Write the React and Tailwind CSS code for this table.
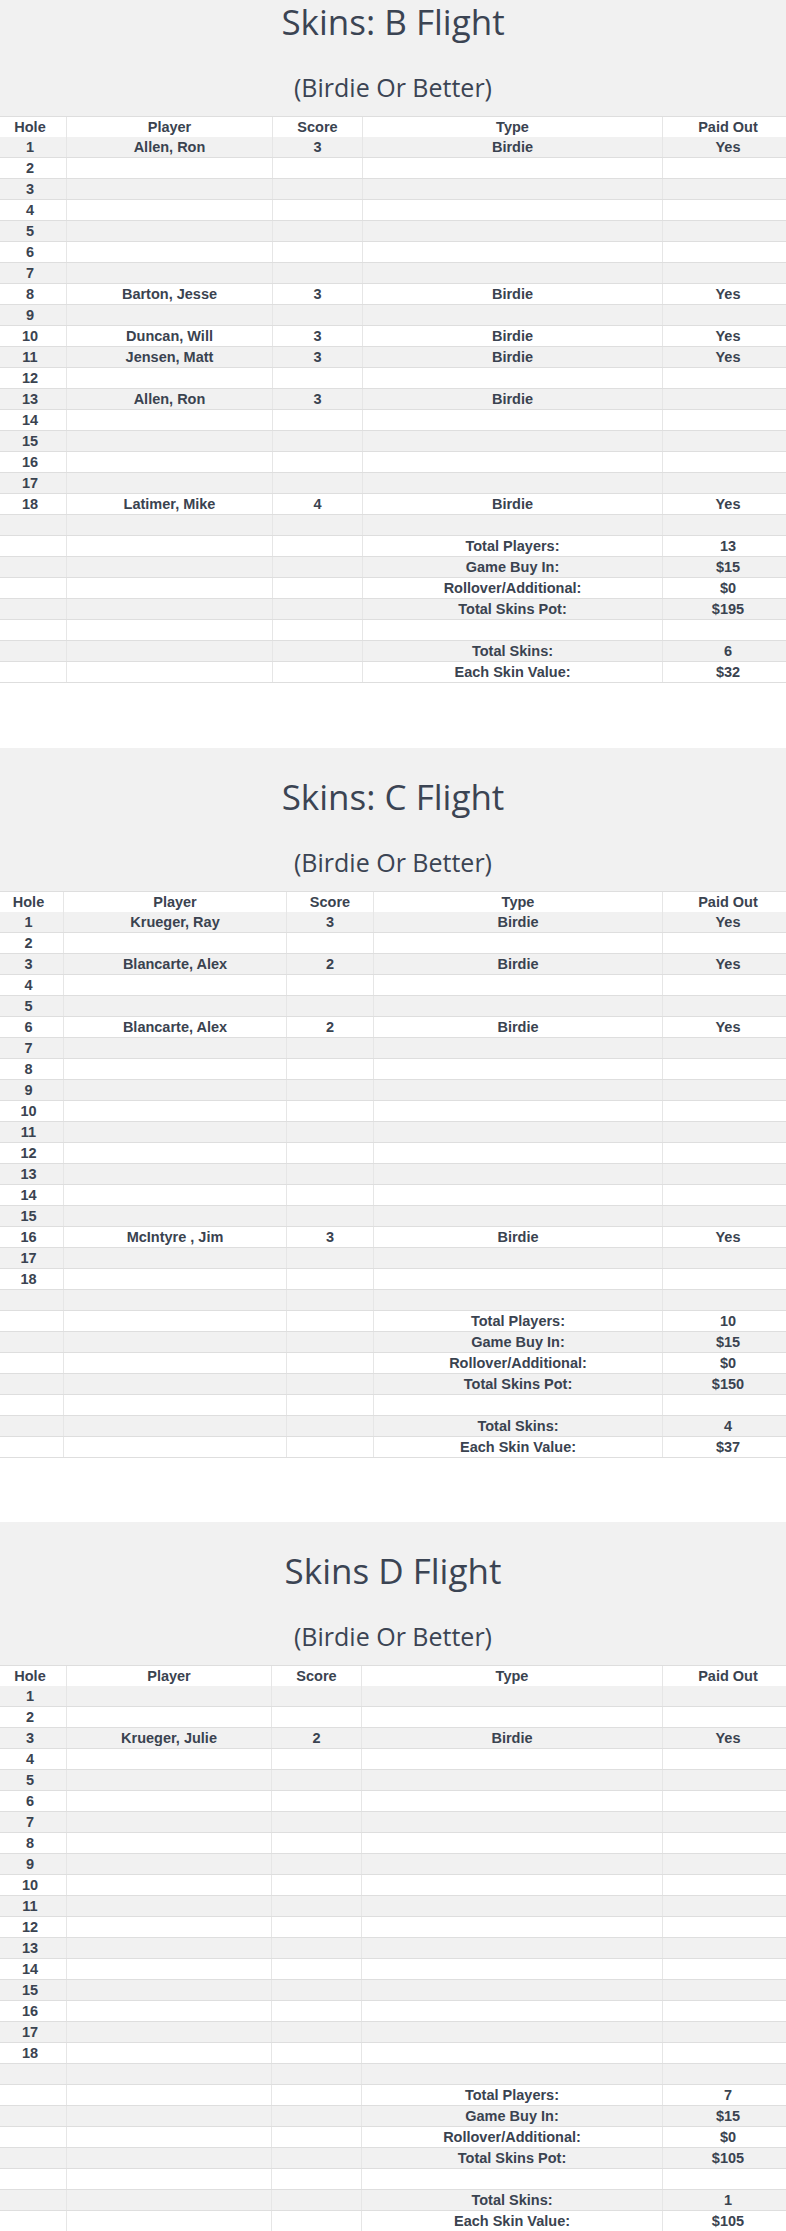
const flights = [
  {
    title: "Skins: B Flight",
    cols: ["w-[67px]", "w-[206px]", "w-[90px]", "w-[300px]", "flex-1"],
    top: "pt-[2px]",
    gap: "mb-[65px]",
    skins: {
      1: ["Allen, Ron", "3", "Birdie", "Yes"],
      8: ["Barton, Jesse", "3", "Birdie", "Yes"],
      10: ["Duncan, Will", "3", "Birdie", "Yes"],
      11: ["Jensen, Matt", "3", "Birdie", "Yes"],
      13: ["Allen, Ron", "3", "Birdie", ""],
      18: ["Latimer, Mike", "4", "Birdie", "Yes"],
    },
    totals: ["13", "$15", "$0", "$195", "6", "$32"],
  },
  {
    title: "Skins: C Flight",
    cols: ["w-[64px]", "w-[223px]", "w-[87px]", "w-[289px]", "flex-1"],
    top: "pt-[29px]",
    gap: "mb-[64px]",
    skins: {
      1: ["Krueger, Ray", "3", "Birdie", "Yes"],
      3: ["Blancarte, Alex", "2", "Birdie", "Yes"],
      6: ["Blancarte, Alex", "2", "Birdie", "Yes"],
      16: ["McIntyre , Jim", "3", "Birdie", "Yes"],
    },
    totals: ["10", "$15", "$0", "$150", "4", "$37"],
  },
  {
    title: "Skins D Flight",
    cols: ["w-[67px]", "w-[205px]", "w-[90px]", "w-[301px]", "flex-1"],
    top: "pt-[29px]",
    gap: "mb-0",
    skins: {
      3: ["Krueger, Julie", "2", "Birdie", "Yes"],
    },
    totals: ["7", "$15", "$0", "$105", "1", "$105"],
  },
];

const totalLabels = [
  "Total Players:",
  "Game Buy In:",
  "Rollover/Additional:",
  "Total Skins Pot:",
  null,
  "Total Skins:",
  "Each Skin Value:",
];

// each row is 20px of content + 1px line
const Row = ({ cols, cells, shaded, header }) => (
  <div
    className={`flex h-[21px] ${
      header ? "border-t border-[#dedede]" : "border-b border-[#dedede]"
    } ${shaded ? "bg-[#f1f1f1]" : "bg-white"}`}
  >
    {cells.map((text, i) => (
      <div
        key={i}
        className={`${cols[i]} ${i < 4 ? "border-r border-[#e6e6e6]" : ""} ${
          i === 0 ? "pr-[6px]" : ""
        } ${i === 4 ? "pl-[7px]" : ""} flex items-center justify-center leading-[20px] whitespace-nowrap`}
      >
        {text}
      </div>
    ))}
  </div>
);

const Flight = ({ flight }) => {
  const rows = [];
  for (let hole = 1; hole <= 18; hole++) {
    const s = flight.skins[hole] || ["", "", "", ""];
    rows.push([String(hole), ...s]);
  }
  rows.push(["", "", "", "", ""]);

  let t = 0;
  totalLabels.forEach((label) => {
    if (label === null) {
      rows.push(["", "", "", "", ""]);
    } else {
      rows.push(["", "", "", label, flight.totals[t]]);
      t++;
    }
  });

  return (
    <section className={flight.gap}>
      <div
        className={`bg-[#f1f1f1] ${flight.top} pb-[14px] text-center text-[#3b4453] font-['Open_Sans',sans-serif]`}
      >
        <h1 className="text-[35px] leading-[40px] font-normal">{flight.title}</h1>
        <h2 className="mt-[30px] text-[25px] leading-[30px] font-normal">(Birdie Or Better)</h2>
      </div>

      <div className="text-[14.5px] font-bold text-[#3a4350] font-['Liberation_Sans',Arial,sans-serif]">
        <Row cols={flight.cols} header cells={["Hole", "Player", "Score", "Type", "Paid Out"]} />
        {rows.map((cells, i) => (
          <Row key={i} cols={flight.cols} cells={cells} shaded={i % 2 === 0} />
        ))}
      </div>
    </section>
  );
};

export default function App() {
  return (
    <div className="w-full bg-white overflow-hidden">
      {flights.map((f) => (
        <Flight key={f.title} flight={f} />
      ))}
    </div>
  );
}
